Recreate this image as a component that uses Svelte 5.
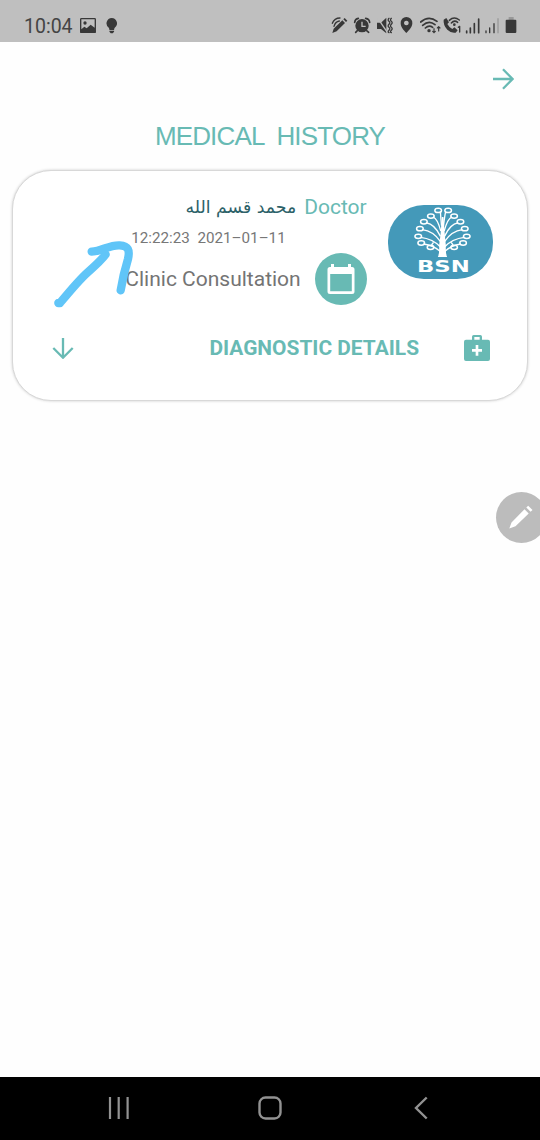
<script>
  // Each fruit of the tree logo: centre of the ring and the point where its stem meets the trunk.
  const rings = [
    [174, 46, 184, 92], [204, 46, 190, 92],
    [152, 63, 182, 108], [222, 63, 192, 108],
    [131, 80, 181, 124], [241, 80, 193, 124],
    [119, 101, 181, 140], [254, 101, 193, 140],
    [114, 124, 181, 156], [260, 124, 193, 156],
    [123, 144, 181, 170], [249, 144, 193, 170]
  ];
  const buds = [[151, 157], [222, 157]];
</script>

<div class="screen">
  <header class="status">
    <div class="left">
      <span class="clock">10:04</span>
      <svg class="photo" viewBox="0 0 48 46"><path fill-rule="evenodd" d="M4 0H44Q48 0 48 4V42Q48 46 44 46H4Q0 46 0 42V4Q0 0 4 0ZM4 4V34L13 26L20 31L32 20L44 29V4Z"/><circle cx="15" cy="15" r="5"/></svg>
      <svg class="bulb" viewBox="0 0 34 48"><path d="M17 0A16 16 0 0 1 26 29Q24 32 24 36H10Q10 32 8 29A16 16 0 0 1 17 0ZM10 38H24V41L20 46H14L10 41Z"/></svg>
    </div>
    <div class="right">
      <svg width="22" height="20" viewBox="34 45 66 60"><path d="M38 99L42 86L68 61L76 69L51 94ZM71 58L75 54L83 62L79 66Z"/><path class="line" d="M38 70Q44 54 61 54M43 79Q47 65 59 63" stroke-width="4"/></svg>
      <svg width="21" height="20" viewBox="100 45 63 60"><circle cx="127" cy="77" r="20"/><path class="line" d="M105 67Q106 57 116 55M138 55Q149 57 150 67M113 92L108 97M141 92L147 97" stroke-width="5"/><path class="cut" d="M127 65V79H138"/></svg>
      <svg width="24" height="20" viewBox="163 45 72 60"><path d="M172 68H184L200 53V100L184 87H172Z"/><path d="M173 53L203 97" stroke="#bfbfbf" stroke-width="4"/><path class="line" d="M208 55Q203 60 208 64T208 73T208 82T208 91T208 98M215 55Q210 60 215 64T215 73T215 82T215 91T215 98" stroke-width="4"/></svg>
      <svg width="22" height="20" viewBox="235 45 66 60"><path fill-rule="evenodd" d="M260 51A18 18 0 0 1 278 70C278 81 268 91 260 99C252 91 243 81 243 70A17 18 0 0 1 260 51ZM260 62A7 7 0 1 0 260.1 62Z"/></svg>
      <svg width="23" height="20" viewBox="301 45 69 60"><path class="line" d="M303 66Q327 45 352 64M309 76Q328 59 346 74M317 84Q328 74 339 82" stroke-width="5"/><circle cx="328" cy="92" r="5"/><path class="line" d="M343 98V86M339 94L343 98L347 94M357 80V93M353 84L357 80L361 84" stroke-width="3.5"/></svg>
      <svg width="21" height="20" viewBox="370 45 63 60"><path d="M372 59L380 54L388 67L383 72Q388 82 398 87L404 82L414 91L408 98Q396 101 383 89Q370 75 372 59Z"/><path class="line" d="M389 61Q403 48 419 60M395 69Q404 59 414 67" stroke-width="4.5"/><circle cx="404" cy="74" r="4"/><path class="line" d="M416 82L420 79V96" stroke-width="4"/></svg>
      <svg width="18" height="20" viewBox="433 45 54 60"><path class="line" d="M441 93V98M452 84V98M464 71V98M477 57V98" stroke-width="5"/></svg>
      <svg width="21" height="20" viewBox="487 45 63 60"><path class="line" d="M499 93V98M510 84V98M523 71V98" stroke-width="4"/><path d="M535 55V100" stroke="#999" stroke-width="4"/></svg>
      <svg width="18" height="20" viewBox="550 45 54 60"><path fill="#989898" style:fill="#989898" d="M567 51H582V60H567Z"/><path d="M561 59H587Q590 59 590 62V96Q590 99 587 99H561Q558 99 558 96V62Q558 59 561 59Z"/></svg>
    </div>
  </header>

  <main>
    <div class="topbar">
      <svg class="arrow" viewBox="0 0 22 22"><path d="M1 11H20.5M11 1.3L20.7 11L11 20.7"/></svg>
    </div>
    <h1>MEDICAL HISTORY</h1>

    <section class="card">
      <div class="visit">
        <div class="info">
          <div class="doctor"><span class="name" lang="ar" dir="rtl">محمد قسم الله</span><span class="role">Doctor</span></div>
          <div class="date">12:22:23 2021–01–11</div>
          <div class="kind">
            <span>Clinic Consultation</span>
            <div class="disc">
              <svg width="28" height="32" viewBox="0 0 28 32"><path fill="#fff" fill-rule="evenodd" d="M4 1H7V4H21V1H24V4H25Q27.500 4 27.500 6.500V28.500Q27.500 31 25 31H3Q.5 31 .5 28.500V6.500Q.5 4 3 4H4ZM3.200 11V28.300H24.800V11Z"/></svg>
            </div>
          </div>
        </div>
        <svg class="logo" viewBox="23 30 316 222">
          <rect x="23" y="30" width="316" height="222" rx="108" ry="108" fill="#4499b9"/>
          <g fill="none" stroke="#fff">
            {#each rings as [x, y, tx, ty]}
              <path stroke-width="4" d="M{x + (x < 187 ? 7 : -7)} {y + 3}Q{x * 0.35 + tx * 0.65} {y + 7} {tx} {ty}" />
              <ellipse cx={x} cy={y} rx="10" ry="6.500" stroke-width="4.500" />
            {/each}
            {#each buds as [x, y]}
              <path stroke-width="4" d="M{x + (x < 187 ? 3 : -3)} {y - 7}L{x + (x < 187 ? 9 : -9)} {y - 15}" />
              <ellipse cx={x} cy={y} rx="10" ry="6.500" stroke-width="4.500" />
            {/each}
          </g>
          <path fill="#fff" d="M185 66H190L194 120L197 150Q196 176 201 186H173Q178 176 177 150L181 120Z"/>
          <text x="110" y="232" textLength="159" lengthAdjust="spacingAndGlyphs">BSN</text>
        </svg>
      </div>
      <div class="details">
        <svg class="arrow" viewBox="0 0 22 22"><path d="M11 1V20.500M1.300 11L11 20.700L20.700 11"/></svg>
        <span class="label">DIAGNOSTIC DETAILS</span>
        <svg class="kit" viewBox="0 0 78 78"><path fill="#68bab4" fill-rule="evenodd" d="M24 14V5Q24 0 29 0H49Q54 0 54 5V14H72Q78 14 78 20V72Q78 78 72 78H6Q0 78 0 72V20Q0 14 6 14ZM31 14H47V6H31ZM35 30V42H24V50H35V62H43V50H54V42H43V30Z"/></svg>
      </div>
      <svg class="scribble" width="86" height="74" viewBox="0 0 258 222"><g fill="none" stroke="#60c5f8" stroke-linecap="round" stroke-linejoin="round"><path stroke-width="25" d="M16 198H21C45 169 77 130 104 106Q145 70 158 52"/><path stroke-width="25" d="M116 44C145 43 170 23 200 25C226 27 231 39 225 66Q211 112 203 160"/></g></svg>
    </section>
  </main>

  <div class="pen"><svg width="24" height="24" viewBox="0 0 24 24"><path fill="#fff" d="M.3 23.500L2.500 17.500L15.500 4.200L19.700 8.400L6.500 21.300ZM17.300 2.500L19.200.7L23.500 5L21.600 6.800Z"/></svg></div>

  <nav>
    <svg width="22" height="24" viewBox="0 0 22 24"><path d="M2 1V23M10.700 1V23M19.600 1V23" stroke-width="2.200"/></svg>
    <svg width="24" height="24" viewBox="0 0 24 24"><rect x="1.500" y="1.500" width="21" height="21" rx="6" stroke-width="2.400"/></svg>
    <svg width="14" height="24" viewBox="0 0 14 24"><path d="M12.700 1.500L2 12L12.700 22.500" stroke-width="2.400"/></svg>
  </nav>
</div>

<style>
  :global(body) { margin: 0; background: #fff; }
  svg { display: block; flex: none; }
  .screen { position: relative; display: flex; flex-direction: column; width: 540px; height: 1140px; overflow: hidden; background: #fefefe; font-family: Roboto, sans-serif; }
  .status { display: flex; justify-content: space-between; box-sizing: border-box; height: 42px; padding: 15px 19px 0 24px; background: #bfbfbf; }
  .left, .right { display: flex; }
  .status svg { fill: #383838; }
  .clock { width: 56px; font-size: 19.5px; line-height: 23px; color: #444; }
  .photo { width: 16px; height: 15.300px; margin-top: 3px; }
  .bulb { width: 11.500px; height: 16px; margin: 3px 0 0 9.500px; }
  .status .line { fill: none; stroke: #383838; stroke-linecap: round; stroke-linejoin: round; }
  .cut { fill: none; stroke: #bfbfbf; stroke-width: 4; }
  main { flex: 1; }
  .topbar { display: flex; justify-content: flex-end; padding: 26px 26px 0 0; }
  .arrow { width: 22px; height: 22px; fill: none; stroke: #68bab4; stroke-width: 2.300; }
  h1 { margin: 31px 0 0; height: 49px; text-align: center; font: 400 26px/30px "Liberation Sans", sans-serif; color: #68bab4; letter-spacing: -.85px; word-spacing: 6.500px; }
  .card { position: relative; box-sizing: border-box; width: 516px; height: 231px; margin: 0 0 0 12px; border: 1.500px solid #d8d8d8; border-radius: 39px; box-shadow: 0 0 3px #0003; background: #fff; padding: 23px 33px 0 39px; }
  .visit { display: flex; justify-content: flex-end; gap: 21px; margin-right: 1.300px; }
  .logo { width: 105px; height: 74px; margin-top: 11px; }
  .logo text { font: 700 50px "DejaVu Sans", sans-serif; fill: #fff; }
  .info { display: flex; flex-direction: column; align-items: flex-end; }
  .doctor { display: flex; gap: 8px; height: 26px; line-height: 26px; font-size: 21px; color: #68bab4; }
  .name { font-family: "DejaVu Sans", sans-serif; font-size: 17.300px; color: #2c6168; }
  .date { height: 20px; margin: 8px 81px 0 0; font: 15.200px/20px Roboto, sans-serif; color: #777; word-spacing: 4px; }
  .kind { display: flex; align-items: center; gap: 14px; height: 52px; margin-top: 5px; font-size: 21px; color: #747474; }
  .disc { display: flex; align-items: center; justify-content: center; width: 52px; height: 52px; border-radius: 50%; background: #68bab4; }
  .details { display: flex; align-items: center; margin-top: 29px; height: 28px; }
  .label { margin-left: auto; font-weight: 700; font-size: 20.900px; color: #68bab4; }
  .kit { width: 26px; height: 26px; margin: 0 4px 0 45px; }
  .scribble { position: absolute; left: 40px; top: 65.500px; }
  .pen { position: absolute; left: 496px; top: 492px; width: 51px; height: 51px; box-sizing: border-box; padding: 13px; border-radius: 50%; background: #bcbcbc; }
  nav { display: flex; align-items: center; box-sizing: border-box; height: 63px; padding: 0 0 1px 107.500px; background: #000; }
  nav svg { fill: none; stroke: #929292; }
  nav svg:nth-child(2) { margin: 0 132px 0 128px; }
</style>
